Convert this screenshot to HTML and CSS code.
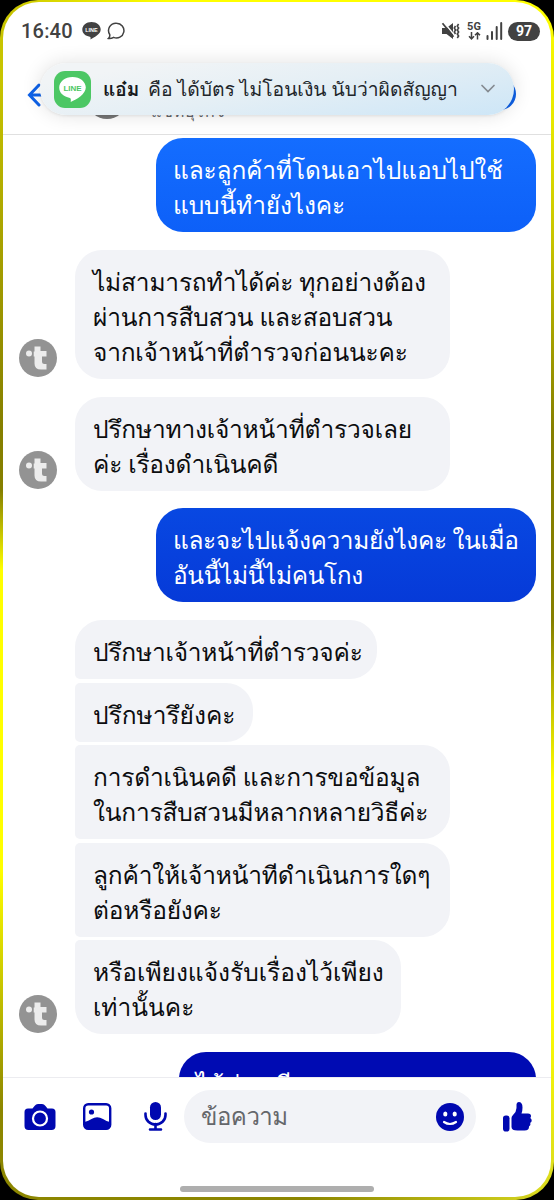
FILE: index.html
```html
<!DOCTYPE html>
<html lang="th">
<head>
<meta charset="utf-8">
<title>แชท</title>
<link rel="stylesheet" href="styles.css">
</head>
<body>
<svg class="defs" width="0" height="0" aria-hidden="true">
  <symbol id="avatar" viewBox="0 0 38 38">
    <circle cx="19" cy="19" r="19" fill="#939393"/>
    <circle cx="10" cy="14.500" r="3" fill="#ececec"/>
    <path d="M15.500 7.500h6V12h6v5.500h-4.500v5q0 2.500 2.500 2.500h2v5.500h-5.500q-6.500 0-6.500-6V17.500h-.8v-5h.8z" fill="#ececec"/>
  </symbol>
</svg>
<div class="phone">
  <div class="screen">
    <header class="top">
      <div class="status">
        <span class="time">16:40</span>
        <svg class="st-line" width="19" height="18" viewBox="0 0 19 18"><path d="M9.500 0C4.200 0 .3 3.400.3 7.600c0 3.800 3.100 6.600 7.500 7.200.9.200.8 1 .7 2.600 4.200-2.100 10.200-5.300 10.200-9.800C18.700 3.400 14.800 0 9.500 0z" fill="#424242"/><text x="9.500" y="9.900" class="line-small">LINE</text></svg>
        <svg class="st-chat" width="19" height="18" viewBox="0 0 19 18"><path d="M9.600 1.200a7.400 7.400 0 1 1-3 14.200C5 16.400 3 16.700 1.400 16.500c1-.9 1.700-2.200 1.300-4A7.400 7.400 0 0 1 9.600 1.200z" fill="none" stroke="#424242" stroke-width="1.500"/></svg>
        <span class="spacer"></span>
        <svg class="st-mute" width="19" height="18" viewBox="0 0 19 18"><path d="M1 6h4.500L12 1v16l-6.500-5H1z" fill="#424242"/><path d="M3 .5l11.500 14" stroke="#fff" stroke-width="1.500"/><path d="M1.500 1.200l11 13.500" stroke="#424242" stroke-width="1.800"/><path d="M14.500 4l-1.200 2 1.200 2-1.200 2 1.200 2M17.600 2l-1.300 2 1.300 2-1.300 2 1.300 2-1.300 2 1.300 2-1.300 2" fill="none" stroke="#424242" stroke-width="1.600"/></svg>
        <span class="net"><span class="net-label">5G</span><svg width="13" height="8" viewBox="0 0 13 8"><path d="M3.500 0v6.500M1 4.200l2.500 2.600L6 4.200M9.500 7.500V1M7 3.300L9.500.8 12 3.300" fill="none" stroke="#424242" stroke-width="1.500"/></svg></span>
        <svg class="st-signal" width="17" height="18" viewBox="0 0 17 18"><path d="M1.500 14v3M6 10v7M10.700 5v12M15.200 1v16" stroke="#424242" stroke-width="2" stroke-linecap="round"/></svg>
        <span class="battery">97</span>
      </div>
      <div class="chatbar">
        <svg class="back" width="18" height="24" viewBox="0 0 18 24"><path d="M12 2L2.500 12 12 22M3 12h15" fill="none" stroke="#0f62e8" stroke-width="3" stroke-linecap="round"/></svg>
        <span class="head-avatar"></span>
        <span class="subtitle">แชทธุรกิจ</span>
        <span class="info"></span>
      </div>
      <div class="toast">
        <svg width="37" height="37" viewBox="0 0 37 37"><rect width="37" height="37" rx="11" fill="#4cc764"/><path d="M18.500 6C11 6 5.200 10.800 5.200 16.600c0 5.300 4.400 9.500 10.700 10.300 1.200.3 1 1.500.8 4.100 6.200-2.600 15.100-8 15.100-14.400C31.800 10.800 26 6 18.500 6z" fill="#fff"/><text x="18.500" y="19.600" class="line-big">LINE</text></svg>
        <b class="sender">แอ๋ม</b>
        <span class="preview">คือ ได้บัตร ไม่โอนเงิน นับว่าผิดสัญญา</span>
        <svg class="chev" width="16" height="10" viewBox="0 0 16 10"><path d="M2 1.500l6 6 6-6" fill="none" stroke="#858b91" stroke-width="1.700" stroke-linecap="round"/></svg>
      </div>
    </header>

    <main class="chat">
      <div class="bubble out b1"><span>และลูกค้าที่โดนเอาไปแอบไปใช้</span><span>แบบนี้ทำยังไงคะ</span></div>
      <div class="row r2"><svg class="avatar"><use href="#avatar"/></svg>
        <div class="bubble in wide"><span>ไม่สามารถทำได้ค่ะ ทุกอย่างต้อง</span><span>ผ่านการสืบสวน และสอบสวน</span><span>จากเจ้าหน้าที่ตำรวจก่อนนะคะ</span></div></div>
      <div class="row r3"><svg class="avatar"><use href="#avatar"/></svg>
        <div class="bubble in wide"><span>ปรึกษาทางเจ้าหน้าที่ตำรวจเลย</span><span>ค่ะ เรื่องดำเนินคดี</span></div></div>
      <div class="bubble out b4"><span>และจะไปแจ้งความยังไงคะ ในเมื่อ</span><span>อันนี้ไม่นี้ไม่คนโกง</span></div>
      <div class="row r5"><svg class="avatar"><use href="#avatar"/></svg>
        <div class="stack">
          <div class="bubble in w1"><span>ปรึกษาเจ้าหน้าที่ตำรวจค่ะ</span></div>
          <div class="bubble in w2"><span>ปรึกษารึยังคะ</span></div>
          <div class="bubble in wide"><span>การดำเนินคดี และการขอข้อมูล</span><span>ในการสืบสวนมีหลากหลายวิธีค่ะ</span></div>
          <div class="bubble in wide"><span>ลูกค้าให้เจ้าหน้าทีดำเนินการใดๆ</span><span>ต่อหรือยังคะ</span></div>
          <div class="bubble in w3"><span>หรือเพียงแจ้งรับเรื่องไว้เพียง</span><span>เท่านั้นคะ</span></div>
        </div></div>
      <div class="bubble out b6"><span>ได้ค่ะ คดี</span></div>
    </main>

    <footer class="composer">
      <svg class="ic-cam" width="32" height="26" viewBox="0 0 32 26"><path d="M4 4.500h4.500l2-2.500Q12 0 14 0h4q2 0 3.500 2l2 2.500H28q3.500 0 3.500 3.500v14q0 4-4 4h-23q-4 0-4-4V8Q.5 4.500 4 4.500z" fill="#0008b0"/><circle cx="16" cy="14.500" r="7" fill="none" stroke="#fff" stroke-width="2.200"/></svg>
      <svg class="ic-pic" width="29" height="27" viewBox="0 0 29 27"><rect x="1.200" y="1.200" width="26" height="24.500" rx="4" fill="none" stroke="#0008b0" stroke-width="2.400"/><circle cx="8.500" cy="9" r="2.600" fill="#0008b0"/><path d="M1.500 19q4-1 7-3 5.500-3.700 11.500 0 3.500 2.300 7 3v4q0 2.500-3 2.500H4.500q-3 0-3-2.500z" fill="#0008b0"/></svg>
      <svg class="ic-mic" width="23" height="29" viewBox="0 0 23 29"><rect x="6" y="0" width="11" height="18" rx="5.500" fill="#0008b0"/><path d="M1.500 11.500v1.500a10 9.500 0 0 0 20 0v-1.500M11.500 22v5M6 27.500h11" fill="none" stroke="#0008b0" stroke-width="2.600" stroke-linecap="round"/></svg>
      <div class="field"><span>ข้อความ</span>
        <svg width="28" height="28" viewBox="0 0 28 28"><circle cx="14" cy="14" r="14" fill="#0008b0"/><ellipse cx="9.300" cy="11" rx="2.100" ry="2.500" fill="#fff"/><ellipse cx="18.700" cy="11" rx="2.100" ry="2.500" fill="#fff"/><path d="M8 19q6 4 12 0" fill="none" stroke="#fff" stroke-width="2.200" stroke-linecap="round"/></svg></div>
      <svg class="ic-like" width="29" height="30" viewBox="0 0 29 30"><rect x="0" y="13.500" width="6.500" height="16" rx="2.800" fill="#0008b0"/><path d="M8.500 16q0-1.500 1.500-3 3.500-3.500 3.500-7V2.500Q13.500 0 15.700 0q3.800 0 3.800 5.500 0 3.500-1 6H25q3 0 3 2.500 0 1.300-.8 2 1.500.7 1.500 2.500 0 1.700-1.400 2.300.8 2.700-1.300 3.700.3 4-4.500 4h-7q-6 0-6-3.500z" fill="#0008b0"/></svg>
    </footer>
    <div class="home"></div>
  </div>
</div>
</body>
</html>
```
FILE: styles.css
```css
* { box-sizing: border-box; }
body { margin: 0; background: #000; font-family: Loma, "Noto Sans", sans-serif; }
.defs { position: absolute; }
.phone {
  width: 554px; height: 1200px; padding: 2px 3px 3px; border-radius: 38px; overflow: hidden;
  background:
    linear-gradient(90deg, #c8c400, #ff0 30%, #ff0) top / 100% 6px no-repeat,
    linear-gradient(90deg, #8c8600, #8c8600 55%, #d8d820) bottom / 100% 6px no-repeat,
    linear-gradient(180deg, #c8c400 0, #c8c400 80px, #a8a200 240px, #857f00 430px, #857f00 490px, #ff0 570px, #ff0 870px, #8c8600 1110px, #8c8600 1200px) left / 50% 100% no-repeat,
    linear-gradient(180deg, #ff0 0, #e8e800 120px, #c8c400 240px, #857f00 430px, #857f00 620px, #ff0 780px, #ff0 1000px, #d8d820 1200px) right / 50% 100% no-repeat;
}
.screen { height: 1195px; border-radius: 36px; background: #fff; overflow: hidden; display: flex; flex-direction: column; }
.top { height: 133px; flex: none; position: relative; border-bottom: 1px solid #e0e0e0; }
.status { display: flex; align-items: center; height: 58px; padding: 0 10px 0 18px; color: #424242; }
.time { font: 500 20px Roboto, sans-serif; width: 52px; letter-spacing: .2px; }
.st-line { margin-left: 9px; }
.st-chat { margin-left: 6px; }
.spacer { flex: 1; }
.net { display: flex; flex-direction: column; align-items: center; width: 16px; margin: 0 4px 0 6px; }
.net-label { font: 700 11px/10px Roboto, sans-serif; }
.st-signal { margin-right: 5px; }
.battery { width: 32px; height: 19px; border-radius: 10px; background: #424242; color: #fff; font: 700 14px/19px Roboto, sans-serif; text-align: center; margin-right: 1px; }
.line-small { font: 700 5.5px "Liberation Sans", sans-serif; fill: #fff; text-anchor: middle; }
.line-big { font: 700 8px "Liberation Sans", sans-serif; fill: #4cc764; text-anchor: middle; }
.chatbar { display: flex; height: 68px; padding-left: 24px; align-items: flex-start; }
.back { margin-top: 23px; }
.head-avatar { width: 40px; height: 40px; border-radius: 50%; background: #777; margin: 19px 0 0 42px; }
.subtitle { font-size: 16px; line-height: 24px; color: #65676b; margin: 40px 0 0 24px; letter-spacing: .8px; }
.info { width: 32px; height: 32px; border-radius: 50%; background: #0f62e8; margin: 18px 0 0 auto; margin-right: 35px; }
.toast {
  position: absolute; left: 37px; top: 61px; width: 474px; height: 52px; border-radius: 26px;
  background: linear-gradient(170deg, #f1f4f6 15%, #e5eff5 50%, #cde6f7 100%);
  box-shadow: 0 0 18px 2px rgba(0,0,0,.1), 0 1px 3px rgba(0,0,0,.08); display: flex; align-items: center; padding: 0 18px 0 14px;
}
.sender { margin-left: 12px; font-size: 19px; width: 37px; color: #17191c; white-space: nowrap; }
.preview { margin-left: 8px; font-size: 19.3px; word-spacing: -1.5px; color: #22262b; white-space: nowrap; }
.chev { margin-left: auto; }
.chat { height: 942px; overflow: hidden; flex: none; padding: 3px 15px 0; display: flex; flex-direction: column; }
.bubble { border-radius: 27px; font-size: 24.5px; letter-spacing: -.2px; word-spacing: -2px; line-height: 35px; padding: 15px 18px 9px; flex: none; }
.bubble span { display: block; white-space: nowrap; }
.out { align-self: flex-end; width: 380px; color: #fff; padding-left: 17px; }
.b1 { height: 94px; background: linear-gradient(#146dff, #0d60f8); letter-spacing: -.15px; }
.b4 { height: 94px; margin-top: 17px; background: linear-gradient(#0848e2, #063ad8); letter-spacing: -.4px; }
.b6 { width: 357px; height: 95px; margin-top: 17.500px; background: #000bb3; }
.row { display: flex; align-items: flex-end; gap: 19px; flex: none; }
.avatar { width: 38px; height: 38px; flex: none; margin: 0 -1px 2px 1px; }
.r2 { margin-top: 18px; }
.r3 { margin-top: 18px; }
.r5 { margin-top: 18px; }
.r5 .avatar { margin-bottom: 1px; }
.in { background: #f2f3f7; color: #0c0d0f; width: 375px; }
.stack { display: flex; flex-direction: column; gap: 3.6px; }
.stack .in { border-top-left-radius: 5px; border-bottom-left-radius: 5px; }
.stack .in:first-child { border-top-left-radius: 27px; }
.stack .in:last-child { border-bottom-left-radius: 27px; }
.stack .w1 { width: 302px; }
.stack .w2 { width: 178px; letter-spacing: 0; }
.stack .w3 { width: 326px; letter-spacing: 0; }
.composer { height: 78px; border-top: 1px solid #ececf0; display: flex; align-items: center; padding: 0 19px 0 21px; flex: none; }
.ic-pic { margin-left: 27px; }
.ic-mic { margin-left: 32px; }
.field { margin-left: 17px; width: 292px; height: 53px; border-radius: 27px; background: #f2f3f7; display: flex; align-items: center; justify-content: space-between; padding: 0 12px 0 17px; color: #65676b; font-size: 24px; letter-spacing: -.5px; }
.ic-like { margin-left: auto; }
.home { width: 194px; height: 6px; border-radius: 3px; background: #aeaeae; margin: 31px 0 0 177px; flex: none; }
```
